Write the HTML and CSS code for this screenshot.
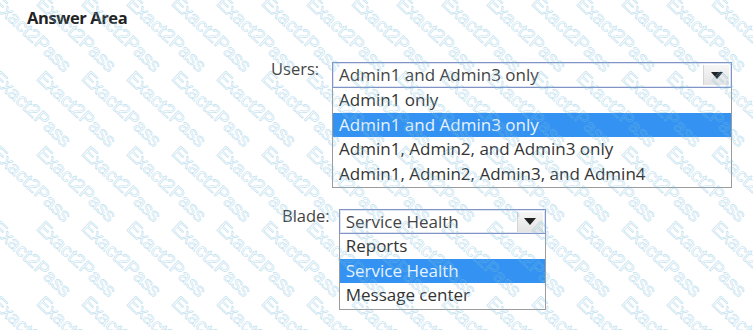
FILE: index.html
```html
<!DOCTYPE html>
<html lang="en">
<head>
    <meta charset="UTF-8">
    <meta name="viewport" content="width=device-width, initial-scale=1.0">
    <title>Answer Area</title>
    <link rel="stylesheet" href="styles.css">
</head>
<body>
    <div class="page">
        <h1 class="title">Answer Area</h1>

        <div class="field field-users">
            <span class="label">Users:</span>
            <div class="combo combo-users">
                <div class="combo-box">
                    <span class="combo-value">Admin1 and Admin3 only</span>
                    <span class="combo-btn"><svg width="12" height="7" viewBox="0 0 12 7"><path d="M0 0h12L6 7z" fill="#222"/></svg></span>
                </div>
                <ul class="combo-list">
                    <li>Admin1 only</li>
                    <li class="selected">Admin1 and Admin3 only</li>
                    <li>Admin1, Admin2, and Admin3 only</li>
                    <li>Admin1, Admin2, Admin3, and Admin4</li>
                </ul>
            </div>
        </div>

        <div class="field field-blade">
            <span class="label">Blade:</span>
            <div class="combo combo-blade">
                <div class="combo-box">
                    <span class="combo-value">Service Health</span>
                    <span class="combo-btn"><svg width="12" height="7" viewBox="0 0 12 7"><path d="M0 0h12L6 7z" fill="#222"/></svg></span>
                </div>
                <ul class="combo-list">
                    <li>Reports</li>
                    <li class="selected">Service Health</li>
                    <li>Message center</li>
                </ul>
            </div>
        </div>

        <div class="watermark" id="watermark"></div>
    </div>

    <script>
        // fill the watermark grid
        const wm = document.getElementById("watermark");
        for (let i = 0; i < 18 * 6; i++) {
            const cell = document.createElement("div");
            cell.className = "wm-cell";
            cell.innerHTML = "<span>Exact2Pass</span>";
            wm.appendChild(cell);
        }
    </script>
</body>
</html>
```

FILE: styles.css
```css
body { margin: 0; font-family: "Open Sans", Arial, sans-serif; background: #fff; color: #333; }
.page {
    position: relative;
    width: 753px;
    height: 330px;
    overflow: hidden;
}
.title {
    margin: 0;
    padding: 7px 0 0 27px;
    font-size: 16.5px;
    font-weight: 700;
    color: #222;
    line-height: 22px;
    letter-spacing: -0.4px;
}

.field { display: flex; align-items: flex-start; }
.field-users { margin-top: 33px; padding-left: 271px; gap: 13px; }
.field-blade { margin-top: 21px; padding-left: 282px; gap: 9px; }
.label { font-size: 16.5px; line-height: 20px; color: #444; margin-top: -3px; }

.combo-users { width: 400px; }
.combo-blade { width: 207px; }
.combo-box {
    display: flex;
    align-items: center;
    height: 24px;
    border: 1px solid #7f93c6;
    box-shadow: inset 0 0 0 1px #dfe4f0;
    background: #fff;
}
.combo-blade .combo-box { height: 23px; }
.combo-value {
    flex: 1;
    padding-left: 6px;
    font-size: 17px;
    line-height: 22px;
    color: #444;
    white-space: nowrap;
}
.combo-btn {
    display: flex;
    align-items: center;
    justify-content: center;
    width: 25px;
    height: 20px;
    margin-right: 2px;
    background: linear-gradient(#f6f6f6, #e4e4e4);
    border-left: 1px solid #d4d4d4;
}
.combo-list {
    list-style: none;
    margin: 0;
    padding: 0 0 1px;
    border: 1px solid #9c9c9c;
    border-top: none;
}
.combo-list li {
    height: 24.5px;
    padding-left: 6px;
    font-size: 17px;
    line-height: 24px;
    color: #333;
    white-space: nowrap;
}
.combo-list li.selected { background: #3392f2; color: #e8f4ff; }

.watermark {
    position: absolute;
    top: -8px;
    left: 2px;
    right: -60px;
    bottom: -60px;
    display: grid;
    grid-template-columns: repeat(18, 45px);
    grid-auto-rows: 75px;
    pointer-events: none;
}
.wm-cell span {
    display: block;
    transform: rotate(43deg);
    transform-origin: 0 0;
    white-space: nowrap;
    font-family: "Liberation Sans", Arial, sans-serif;
    font-size: 19px;
    color: transparent;
    -webkit-text-stroke: 0.6px rgba(120, 190, 220, 0.5);
}
```
